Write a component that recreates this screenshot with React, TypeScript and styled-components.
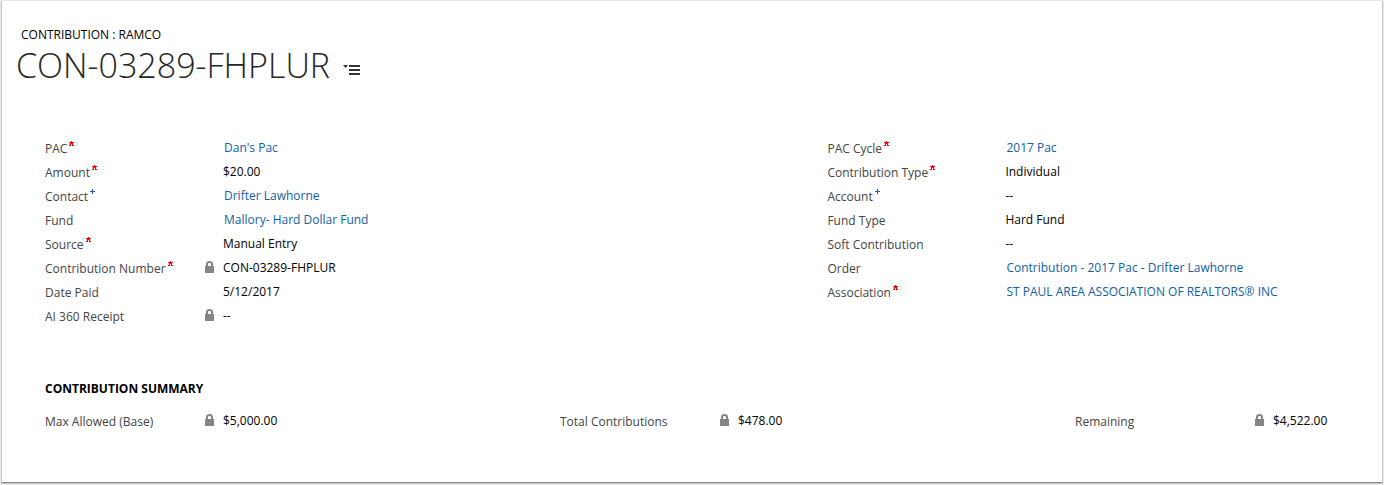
import React from "react";
import styled, { createGlobalStyle } from "styled-components";

const GlobalStyle = createGlobalStyle`
  * { box-sizing: border-box; }
  body {
    margin: 0;
    background: #f0f0f0;
    color: #000;
    font: 12px/16px "Open Sans", "Noto Sans", sans-serif;
  }
`;

const Page = styled.main`
  margin: 1px 2px 2px;
  padding: 26px 0 49px;
  background: #fff;
  box-shadow: 0 1px 0 #8a8a8a, 0 1px 1px 1px #c4c4c4;
`;

const Header = styled.header`
  padding: 0 14px;
`;

const Breadcrumb = styled.p`
  margin: 0;
  padding-left: 5px;
`;

const TitleRow = styled.div`
  display: flex;
  align-items: center;
  gap: 13px;
`;

const Title = styled.h1`
  margin: 0;
  font-size: 34px;
  line-height: 44px;
  font-weight: 300;
  color: #262626;
`;

const MenuButton = styled.button`
  display: block;
  padding: 0;
  margin-top: 10px;
  border: 0;
  background: none;
  line-height: 0;
`;

const Columns = styled.div`
  display: grid;
  grid-template-columns: 783fr 555fr;
  padding: 49px 0 0 43px;
`;

const Fields = styled.dl`
  margin: 0;
`;

const Field = styled.div<{ $labelWidth: number }>`
  display: grid;
  grid-template-columns: ${(p) => p.$labelWidth}px 18px 1fr;
  align-items: center;
  height: 24px;
`;

const Label = styled.dt`
  display: flex;
  gap: 2px;
  padding-top: 1px;
  color: #444;
  white-space: nowrap;
`;

const Value = styled.dd`
  margin: 0;
  grid-column: 3;
  white-space: nowrap;
`;

const LockCell = styled.dd`
  margin: 0;
  padding-bottom: 2px;
  line-height: 0;
`;

const RecordLink = styled.a`
  padding-left: 1px;
  color: #1160a5;
  text-decoration: none;
`;

const Summary = styled.section`
  padding: 53px 0 0 43px;
`;

const SummaryTitle = styled.h2`
  margin: 0 0 12px;
  font-size: 12px;
  line-height: 16px;
  font-weight: 700;
`;

const SummaryFields = styled.dl`
  display: grid;
  grid-template-columns: 515fr 515fr 307fr;
  margin: 0;
`;

type MarkKind = "required" | "recommended";

const Mark = ({ kind }: { kind: MarkKind }) => (
  <svg width="6" height="6" viewBox="0 0 6 6" shapeRendering="crispEdges" role="img" aria-label={kind}>
    {kind === "recommended" ? (
      <path d="M2 0h1v5h-1zM0 2h5v1h-5z" fill="#2458c8" />
    ) : (
      <path d="M2 0h1v3h-1zM0 1h5v1h-5zM1 2h3v1h-3zM1 3h1v1h-1zM3 3h1v1h-1zM0 4h2v1h-2zM3 4h2v1h-2z" fill="#ff0000" />
    )}
  </svg>
);

const Lock = () => (
  <svg width="9" height="12" viewBox="0 0 9 12" role="img" aria-label="Locked">
    <path d="M2 6V3Q2 1 4.5 1T7 3V6" fill="none" stroke="#838388" strokeWidth="2" />
    <rect y="5" width="9" height="7" fill="#838388" />
  </svg>
);

type FieldData = {
  label: string;
  value: string;
  link?: boolean;
  locked?: boolean;
  mark?: MarkKind;
  labelWidth?: number;
};

const leftFields: FieldData[] = [
  { label: "PAC", value: "Dan's Pac", link: true, mark: "required" },
  { label: "Amount", value: "$20.00", mark: "required" },
  { label: "Contact", value: "Drifter Lawhorne", link: true, mark: "recommended" },
  { label: "Fund", value: "Mallory- Hard Dollar Fund", link: true },
  { label: "Source", value: "Manual Entry", mark: "required" },
  { label: "Contribution Number", value: "CON-03289-FHPLUR", locked: true, mark: "required" },
  { label: "Date Paid", value: "5/12/2017" },
  { label: "AI 360 Receipt", value: "--", locked: true },
];

const rightFields: FieldData[] = [
  { label: "PAC Cycle", value: "2017 Pac", link: true, mark: "required" },
  { label: "Contribution Type", value: "Individual", mark: "required" },
  { label: "Account", value: "--", mark: "recommended" },
  { label: "Fund Type", value: "Hard Fund" },
  { label: "Soft Contribution", value: "--" },
  { label: "Order", value: "Contribution - 2017 Pac - Drifter Lawhorne", link: true },
  { label: "Association", value: "ST PAUL AREA ASSOCIATION OF REALTORS® INC", link: true, mark: "required" },
];

const summaryFields: FieldData[] = [
  { label: "Max Allowed (Base)", value: "$5,000.00", locked: true },
  { label: "Total Contributions", value: "$478.00", locked: true },
  { label: "Remaining", value: "$4,522.00", locked: true, labelWidth: 180 },
];

const FieldRow = ({ label, value, link, locked, mark, labelWidth = 160 }: FieldData) => (
  <Field $labelWidth={labelWidth}>
    <Label>
      {label}
      {mark && <Mark kind={mark} />}
    </Label>
    {locked && (
      <LockCell>
        <Lock />
      </LockCell>
    )}
    <Value>{link ? <RecordLink href="#">{value}</RecordLink> : value}</Value>
  </Field>
);

export default function App() {
  return (
    <>
      <GlobalStyle />
      <Page>
        <Header>
          <Breadcrumb>CONTRIBUTION : RAMCO</Breadcrumb>
          <TitleRow>
            <Title>CON-03289-FHPLUR</Title>
            <MenuButton type="button" aria-label="Form menu">
              <svg width="17" height="10" viewBox="0 0 17 10" fill="#333">
                <path d="M0 0h5L2.5 3zM6 0h11v2H6zM6 4h11v2H6zM6 8h11v2H6z" />
              </svg>
            </MenuButton>
          </TitleRow>
        </Header>
        <Columns>
          <Fields>
            {leftFields.map((field) => (
              <FieldRow key={field.label} {...field} />
            ))}
          </Fields>
          <Fields>
            {rightFields.map((field) => (
              <FieldRow key={field.label} {...field} />
            ))}
          </Fields>
        </Columns>
        <Summary>
          <SummaryTitle>CONTRIBUTION SUMMARY</SummaryTitle>
          <SummaryFields>
            {summaryFields.map((field) => (
              <FieldRow key={field.label} {...field} />
            ))}
          </SummaryFields>
        </Summary>
      </Page>
    </>
  );
}
